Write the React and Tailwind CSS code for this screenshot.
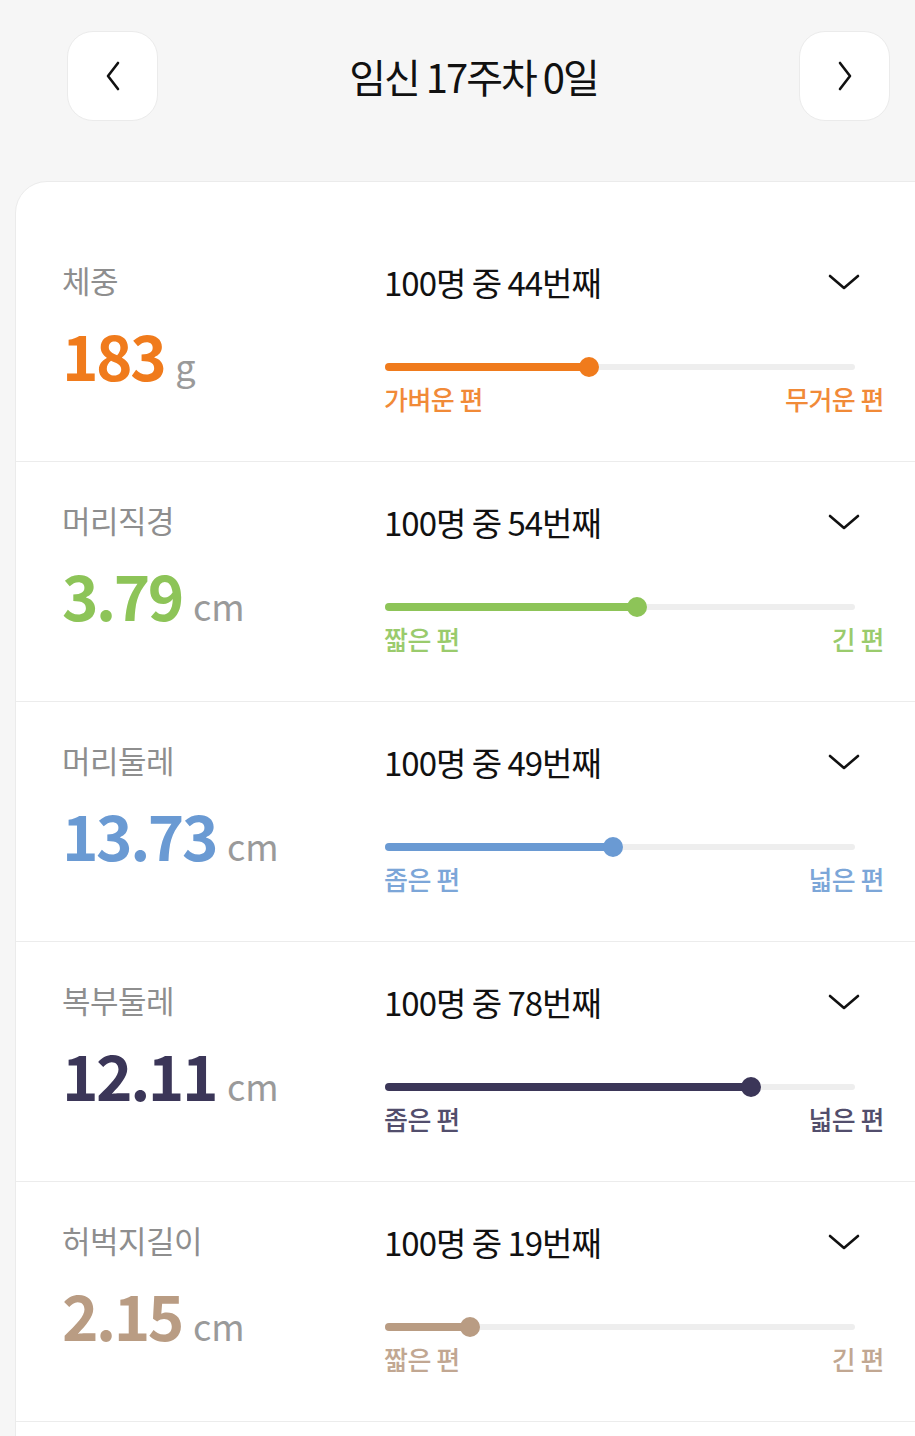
import React from "react";

const rows = [
  { label: "체중", value: "183", unit: "g", rank: 44, color: "#f07b1c", left: "가벼운 편", right: "무거운 편" },
  { label: "머리직경", value: "3.79", unit: "cm", rank: 54, color: "#8dc458", left: "짧은 편", right: "긴 편" },
  { label: "머리둘레", value: "13.73", unit: "cm", rank: 49, color: "#6a9ad3", left: "좁은 편", right: "넓은 편" },
  { label: "복부둘레", value: "12.11", unit: "cm", rank: 78, color: "#3b3658", left: "좁은 편", right: "넓은 편" },
  { label: "허벅지길이", value: "2.15", unit: "cm", rank: 19, color: "#b99c83", left: "짧은 편", right: "긴 편" },
];

function ChevronLeft() {
  return (
    <svg width="18" height="32" viewBox="0 0 18 32" fill="none">
      <path d="M14 3 L4 16 L14 29" stroke="#111" strokeWidth="2.6" strokeLinecap="round" strokeLinejoin="round" />
    </svg>
  );
}
function ChevronRight() {
  return (
    <svg width="18" height="32" viewBox="0 0 18 32" fill="none">
      <path d="M4 3 L14 16 L4 29" stroke="#111" strokeWidth="2.6" strokeLinecap="round" strokeLinejoin="round" />
    </svg>
  );
}
function ChevronDown() {
  return (
    <svg width="32" height="18" viewBox="0 0 32 18" fill="none">
      <path d="M2 3 L16 15 L30 3" stroke="#111" strokeWidth="2.6" strokeLinecap="round" strokeLinejoin="round" />
    </svg>
  );
}

function Row({ r }) {
  const pct = ((r.rank - 1) / 99) * 100;
  return (
    <div className="flex h-[240px] border-b border-[#ececec] pt-[40px] pl-[46px]">
      <div className="w-[322px] flex flex-col">
        <div className="text-[31px] leading-[36px] text-[#8e8e8e] tracking-[-0.5px]">{r.label}</div>
        <div className="flex items-baseline mt-[20px] leading-[72px]">
          <span className="text-[62px] font-bold tracking-[-2.5px]" style={{ color: r.color }}>{r.value}</span>
          <span className="text-[36px] text-[#9a9a9a] ml-[11px]">{r.unit}</span>
        </div>
      </div>
      <div className="w-[500px] flex flex-col">
        <div className="flex items-center h-[40px]">
          <div className="text-[33px] leading-[40px] text-[#111] tracking-[-1px] w-[444px]">100명 중 {r.rank}번째</div>
          <ChevronDown />
        </div>
        <div className="relative w-[470px] h-[20px] mt-[55px] ml-[1px]">
          <div className="absolute left-0 right-0 top-[7px] h-[6px] rounded-full bg-[#eeeeee]" />
          <div className="absolute left-0 top-[6px] h-[8px] rounded-full" style={{ width: `${pct}%`, background: r.color }} />
          <div className="absolute top-0 w-[20px] h-[20px] rounded-full -ml-[10px]" style={{ left: `${pct}%`, background: r.color }} />
        </div>
        <div className="flex justify-between mt-[6px] text-[26px] leading-[32px] font-medium tracking-[-0.5px]" style={{ color: r.color, opacity: 0.88 }}>
          <span>{r.left}</span>
          <span>{r.right}</span>
        </div>
      </div>
    </div>
  );
}

export default function App() {
  return (
    <div className="w-[915px] h-[1436px] overflow-hidden bg-[#f6f6f6]" style={{ fontFamily: '"Noto Sans CJK KR", "Noto Sans", sans-serif' }}>
      <div className="flex items-center justify-between pt-[31px] pl-[67px] pr-[25px]">
        <button className="w-[91px] h-[90px] rounded-[26px] bg-white border border-[#ebebeb] flex items-center justify-center">
          <ChevronLeft />
        </button>
        <div className="text-[40px] leading-[50px] text-[#111] tracking-[-2px] -ml-[10px]">임신 17주차 0일</div>
        <button className="w-[91px] h-[90px] rounded-[26px] bg-white border border-[#ebebeb] flex items-center justify-center">
          <ChevronRight />
        </button>
      </div>
      <div className="ml-[15px] mt-[60px] w-[940px] bg-white border border-[#ebebeb] rounded-[32px] pt-[40px]">
        {rows.map((r) => (
          <Row key={r.label} r={r} />
        ))}
        <div className="h-[200px]" />
      </div>
    </div>
  );
}
